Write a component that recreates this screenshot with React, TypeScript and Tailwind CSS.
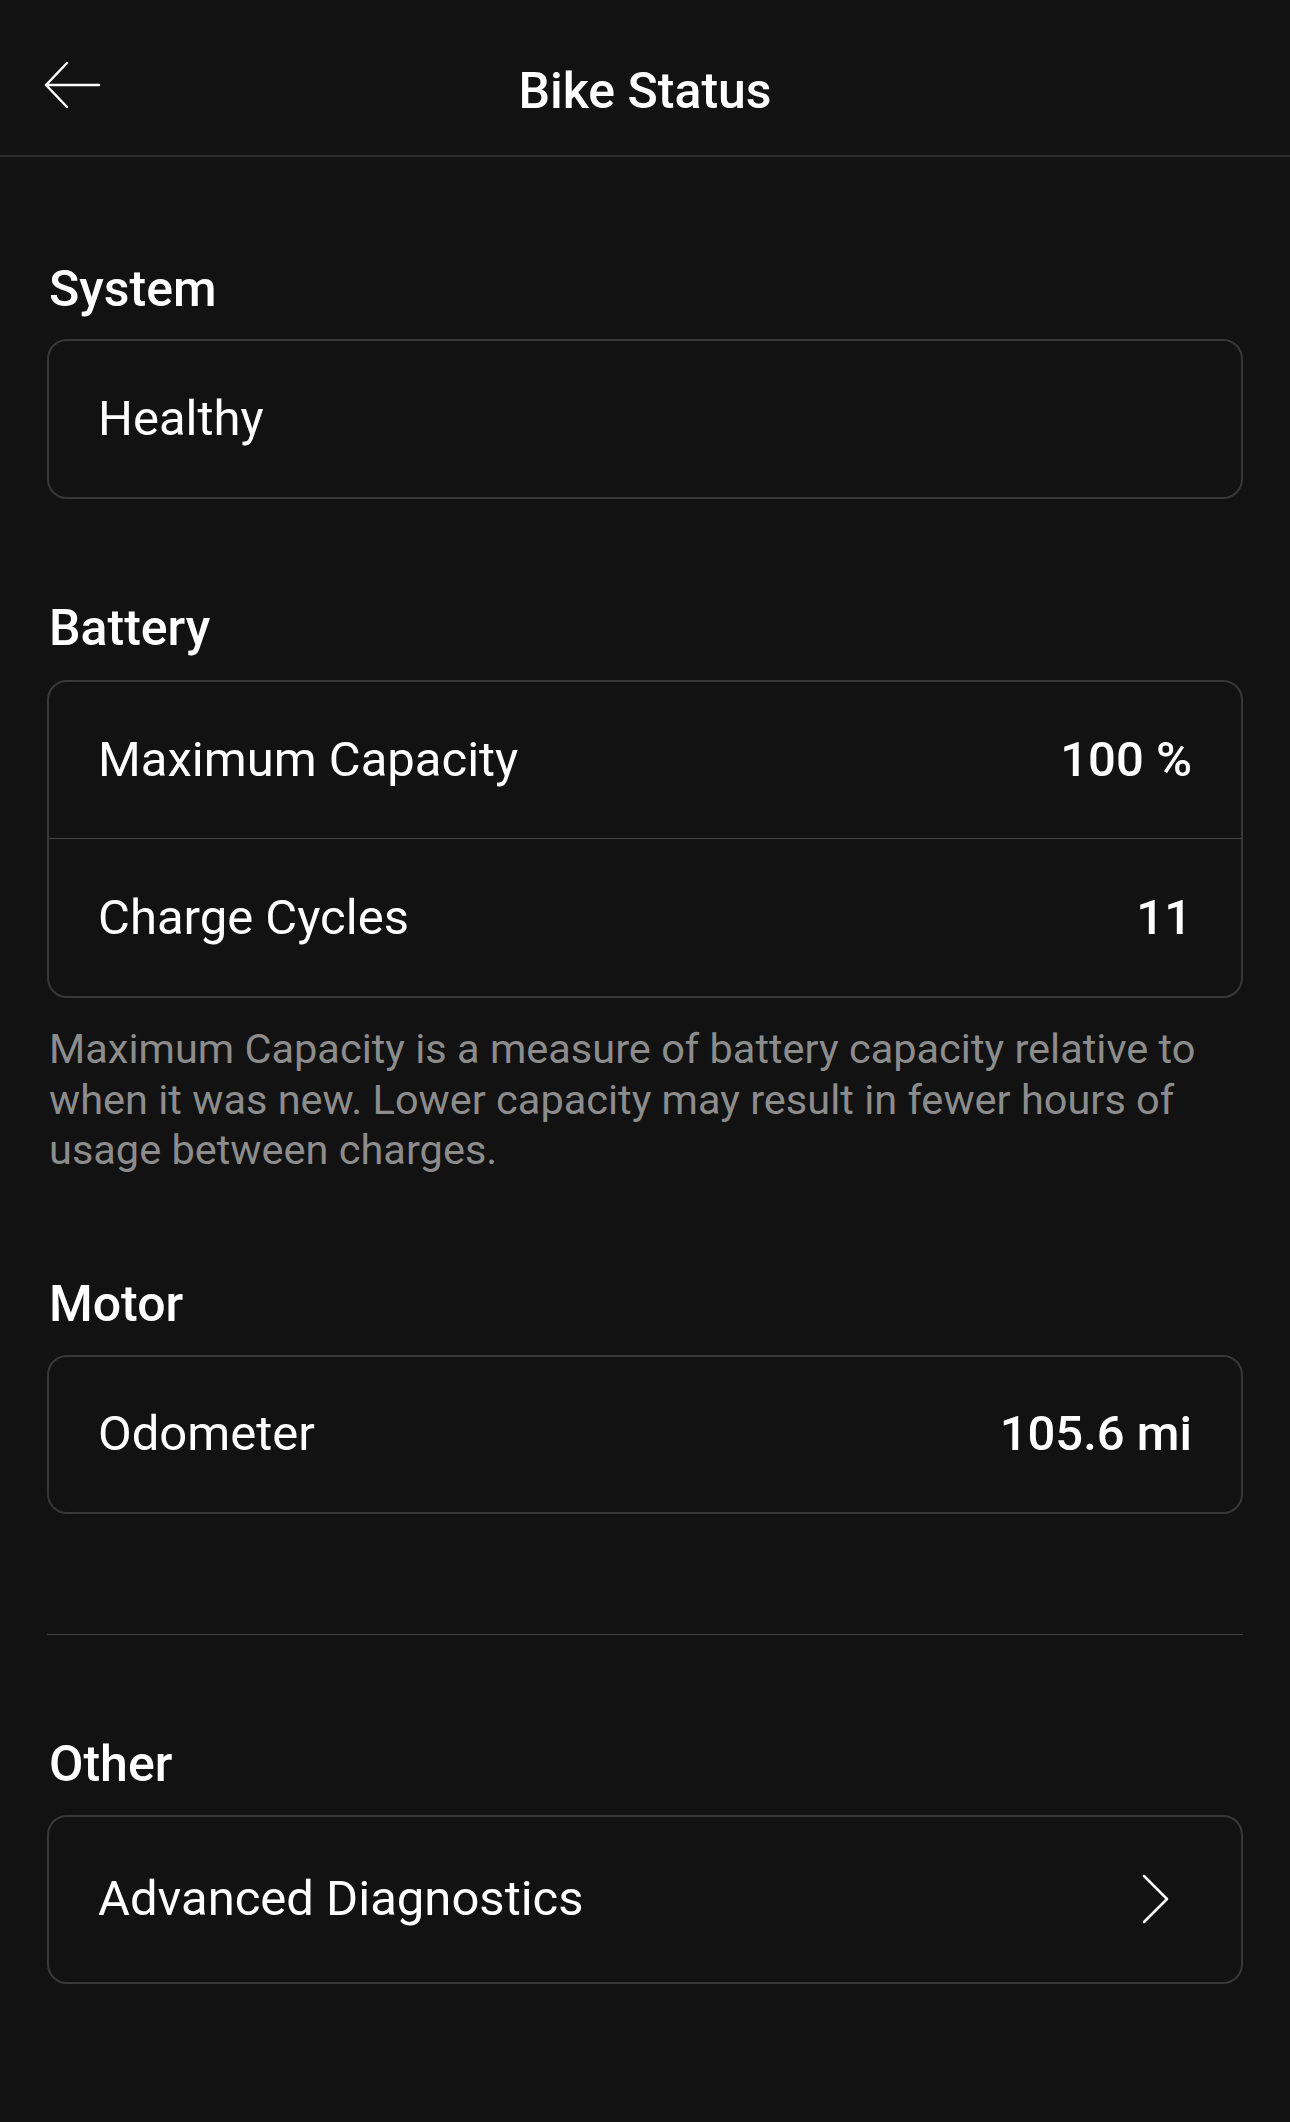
import React from 'react';

function BackArrow() {
    return (
        <svg width="58" height="48" viewBox="0 0 58 48" fill="none" stroke="white" strokeWidth="2.5" strokeLinecap="round" strokeLinejoin="round">
            <path d="M23 2 L2 24 L23 46" />
            <path d="M2 24 H55" />
        </svg>
    );
}

function Chevron() {
    return (
        <svg width="30" height="52" viewBox="0 0 30 52" fill="none" stroke="white" strokeWidth="2.5" strokeLinecap="round" strokeLinejoin="round">
            <path d="M3 3 L26 26 L3 49" />
        </svg>
    );
}

function Heading({ children, className }: { children: React.ReactNode; className: string }) {
    return <h2 className={`pl-[2px] text-[50px] leading-[60px] font-medium ${className}`}>{children}</h2>;
}

function Row({ label, value }: { label: string; value?: string }) {
    return (
        <div className="flex h-[156px] items-center justify-between px-[49px]">
            <span className="text-[49px] font-normal">{label}</span>
            {value && <span className="text-[49px] font-medium">{value}</span>}
        </div>
    );
}

export default function App() {
    return (
        <div className="min-h-[2122px] bg-[#121212] text-white font-[Roboto,sans-serif]">
            <header className="grid h-[157px] grid-cols-[1fr_auto_1fr] items-start border-b-2 border-[#2f2f2f] pt-[61px]">
                <div className="pl-[44px]">
                    <BackArrow />
                </div>
                <h1 className="text-[50px] leading-[60px] font-medium">Bike Status</h1>
                <div />
            </header>

            <main className="px-[47px]">
                <Heading className="mt-[102px]">System</Heading>
                <div className="mt-[20px] rounded-[20px] border-2 border-[#383838]">
                    <Row label="Healthy" />
                </div>

                <Heading className="mt-[99px]">Battery</Heading>
                <div className="mt-[22px] rounded-[20px] border-2 border-[#383838]">
                    <Row label="Maximum Capacity" value="100 %" />
                    <div className="h-px bg-[#444]" />
                    <div className="flex h-[157px] items-center justify-between px-[49px]">
                        <span className="text-[49px] font-normal">Charge Cycles</span>
                        <span className="text-[49px] font-medium">11</span>
                    </div>
                </div>
                <p className="mt-[26px] pl-[2px] text-[41.5px] leading-[50.5px] text-[#8c8c8c]">
                    Maximum Capacity is a measure of battery capacity relative to when it was new. Lower capacity may result in fewer hours of usage between charges.
                </p>

                <Heading className="mt-[98px]">Motor</Heading>
                <div className="mt-[21px] rounded-[20px] border-2 border-[#383838]">
                    <div className="flex h-[155px] items-center justify-between px-[49px]">
                        <span className="text-[49px] font-normal">Odometer</span>
                        <span className="text-[49px] font-medium">105.6 mi</span>
                    </div>
                </div>

                <div className="mt-[120px] h-px bg-[#444]" />

                <Heading className="mt-[99px]">Other</Heading>
                <div className="mt-[21px] flex h-[169px] items-center justify-between rounded-[20px] border-2 border-[#383838] pl-[49px] pr-[70px]">
                    <span className="text-[49px] font-normal">Advanced Diagnostics</span>
                    <Chevron />
                </div>
            </main>
        </div>
    );
}
